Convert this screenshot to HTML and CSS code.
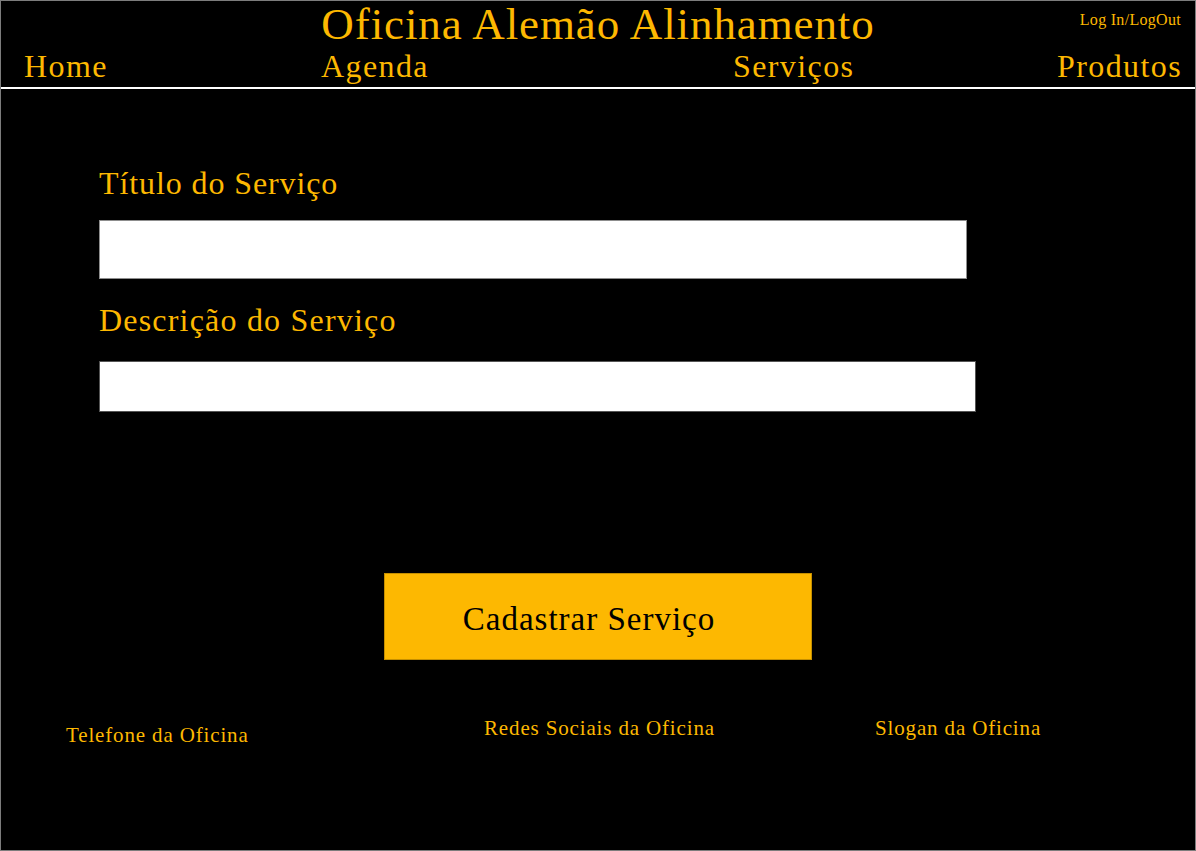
FILE: index.html
```html
<!DOCTYPE html>
<html lang="pt-BR">
<head>
  <meta charset="UTF-8">
  <title>Cadastrar Serviço - Oficina Alemão Alinhamento</title>
  <link rel="stylesheet" href="styles.css">
</head>
<body>

  <header class="topo">
    <div class="topo-linha">
      <span></span>
      <h1 class="titulo">Oficina Alemão Alinhamento</h1>
      <a class="login" href="#">Log In/LogOut</a>
    </div>
    <nav class="menu">
      <a href="#">Home</a>
      <a href="#">Agenda</a>
      <a href="#">Serviços</a>
      <a href="#">Produtos</a>
    </nav>
  </header>

  <main class="conteudo">
    <form class="form-servico" onsubmit="return false;">
      <label class="rotulo" for="titulo">Título do Serviço</label>
      <input class="campo campo-titulo" type="text" id="titulo">

      <label class="rotulo rotulo-desc" for="descricao">Descrição do Serviço</label>
      <input class="campo campo-desc" type="text" id="descricao">

      <button class="btn-cadastrar" type="submit">Cadastrar Serviço</button>
    </form>
  </main>

  <footer class="rodape">
    <span class="rodape-tel">Telefone da Oficina</span>
    <span>Redes Sociais da Oficina</span>
    <span>Slogan da Oficina</span>
  </footer>

</body>
</html>
```

FILE: styles.css
```css
html {
  background: #000;
}
body {
  margin: 0;
  height: 851px;
  box-sizing: border-box;
  border: 1px solid #7c7c7c;
  background: #000;
  color: #fdb801;
  font-family: "Liberation Serif", "DejaVu Serif", serif;
  overflow: hidden;
}
a {
  color: #fdb801;
  text-decoration: none;
}

/* cabeçalho */
.topo {
  border-bottom: 2px solid #fff;
  padding-bottom: 5px;
}
.topo-linha {
  display: grid;
  grid-template-columns: 1fr auto 1fr;
  padding-top: 1px;
}
.titulo {
  margin: 0;
  font-size: 45px;
  font-weight: normal;
  line-height: 1;
  letter-spacing: 0.9px;
}
.login {
  justify-self: end;
  margin-top: 10px;
  margin-right: 14px;
  font-size: 16px;
  line-height: 1;
  letter-spacing: 0.3px;
}
.menu {
  display: grid;
  grid-template-columns: 297px 412px 1fr auto;
  padding: 0 13px 0 23px;
  margin-top: 3px;
}
.menu a {
  font-size: 32px;
  line-height: 1;
  letter-spacing: 1.4px;
}

/* formulário */
.conteudo {
  padding-left: 98px;
}
.form-servico {
  display: flex;
  flex-direction: column;
  align-items: flex-start;
}
.rotulo {
  margin-top: 78px;
  font-size: 32px;
  line-height: 1;
  letter-spacing: 0.9px;
}
.rotulo-desc {
  margin-top: 25px;
  letter-spacing: 1.2px;
}
.campo {
  box-sizing: border-box;
  background: #fff;
  border: 1px solid #8d8d8d;
  margin: 0;
  padding: 0 10px;
  font-family: inherit;
  font-size: 20px;
}
.campo-titulo {
  width: 868px;
  height: 59px;
  margin-top: 21px;
}
.campo-desc {
  width: 877px;
  height: 51px;
  margin-top: 25px;
  border-color: #555;
}
.btn-cadastrar {
  align-self: center;
  margin: 161px 0 0 -99px;
  width: 428px;
  height: 87px;
  box-sizing: border-box;
  background: #fdb801;
  border: 1px solid #c58f00;
  color: #000;
  font-family: inherit;
  font-size: 33px;
  line-height: 1;
  letter-spacing: 1px;
  padding: 5px 17px 0 0;
  cursor: pointer;
}

/* rodapé */
.rodape {
  display: grid;
  grid-template-columns: 418px 391px auto;
  align-items: start;
  padding-left: 65px;
  margin-top: 58px;
  font-size: 21px;
  line-height: 1;
  letter-spacing: 0.85px;
}
.rodape-tel {
  margin-top: 7px;
}
```
